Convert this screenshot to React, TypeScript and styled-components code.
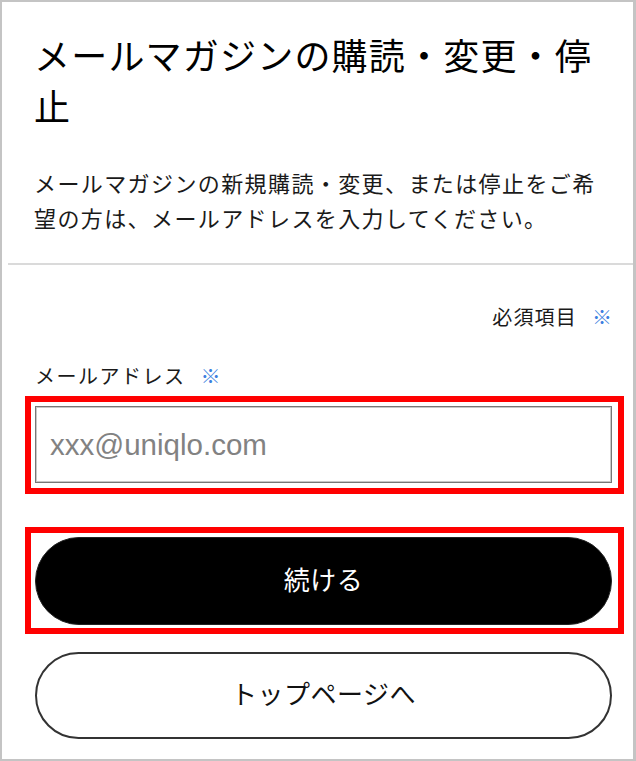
import styled, { createGlobalStyle } from "styled-components";

const GlobalStyle = createGlobalStyle`
  html, body {
    margin: 0;
    padding: 0;
    background: #fff;
  }
  body {
    font-family: "Noto Sans CJK JP", "Noto Sans", sans-serif;
    color: #111;
  }
  * {
    box-sizing: border-box;
  }
`;

export default function App() {
  return (
    <>
      <GlobalStyle />
      <Frame>
        <Intro>
          <Title>メールマガジンの購読・変更・停止</Title>
          <Lead>
            メールマガジンの新規購読・変更、または停止をご希望の方は、メールアドレスを入力してください。
          </Lead>
        </Intro>
        <Divider />
        <Form onSubmit={(e) => e.preventDefault()}>
          <RequiredNote>
            必須項目<Mark>※</Mark>
          </RequiredNote>
          <FieldLabel htmlFor="email">
            メールアドレス<Mark>※</Mark>
          </FieldLabel>
          <Highlight $top={5} $bottom={5}>
            <EmailInput id="email" type="email" placeholder="xxx@uniqlo.com" />
          </Highlight>
          <Highlight $top={33} $bottom={3}>
            <PrimaryButton type="submit">続ける</PrimaryButton>
          </Highlight>
          <SecondaryButton type="button">トップページへ</SecondaryButton>
        </Form>
      </Frame>
    </>
  );
}

const Frame = styled.div`
  height: 761px;
  overflow: hidden;
  background: #fff;
  border: 2px solid #c4c4c4;
  border-right-width: 3px;
`;

const Intro = styled.section`
  padding: 27px 21px 0 32px;
`;

const Title = styled.h1`
  margin: 0;
  font-size: 36px;
  font-weight: 400;
  line-height: 51px;
  letter-spacing: 1.2px;
  color: #000;
`;

const Lead = styled.p`
  margin: 34px 0 0;
  font-size: 22px;
  line-height: 34.5px;
  letter-spacing: 1.4px;
  color: #1a1a1a;
`;

const Divider = styled.hr`
  margin: 29px 0 0 6px;
  border: 0;
  height: 2px;
  background: #dadada;
`;

const Form = styled.form`
  display: flex;
  flex-direction: column;
  padding: 37px 21px 0 33px;
`;

const RequiredNote = styled.p`
  margin: 0;
  align-self: flex-end;
  font-size: 20px;
  line-height: 30px;
  letter-spacing: 1.2px;
  color: #1a1a1a;
`;

const FieldLabel = styled.label`
  margin-top: 29px;
  font-size: 20px;
  line-height: 30px;
  letter-spacing: 1.5px;
  color: #1a1a1a;
`;

const Mark = styled.span`
  margin-left: 15px;
  letter-spacing: 0;
  color: #3d7fe0;
`;

const Highlight = styled.div<{ $top: number; $bottom: number }>`
  margin: ${(p) => p.$top}px -12px 0 -10px;
  padding: 4px 6px ${(p) => p.$bottom}px 4px;
  border: 6px solid #ff0000;
`;

const EmailInput = styled.input`
  display: block;
  width: 100%;
  height: 77px;
  padding: 0 14px;
  border: 1px solid #777;
  box-shadow: inset 0 0 0 1px #c8c8c8;
  border-radius: 0;
  background: #fff;
  font-family: "Liberation Sans", Arial, sans-serif;
  font-size: 29.5px;
  color: #111;
  outline: none;

  &::placeholder {
    color: #828282;
  }
`;

const PillButton = styled.button`
  display: block;
  width: 100%;
  height: 88px;
  padding: 0 0 6px;
  border-radius: 44px;
  font-family: "Noto Sans CJK JP", "Noto Sans", sans-serif;
  font-size: 26px;
  letter-spacing: 0.5px;
  cursor: pointer;
`;

const PrimaryButton = styled(PillButton)`
  border: 1px solid #222;
  background: #000;
  color: #fff;
`;

const SecondaryButton = styled(PillButton)`
  margin-top: 18px;
  height: 87px;
  border: 2px solid #333;
  background: #fff;
  color: #111;
`;
